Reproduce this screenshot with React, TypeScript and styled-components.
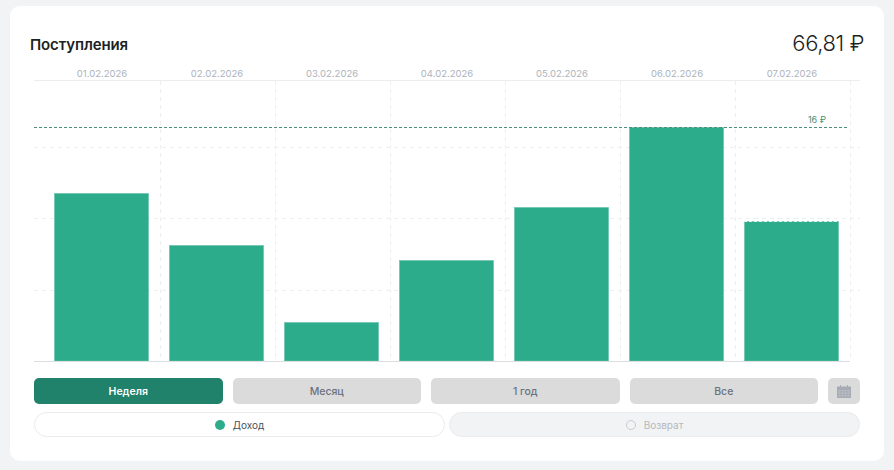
import React from "react";
import styled, { createGlobalStyle } from "styled-components";

const Global = createGlobalStyle`
  html, body { margin: 0; padding: 0; background: #f2f3f5; }
  body { font-family: Inter, "Noto Sans", sans-serif; }
`;

const Page = styled.div`
  width: 894px;
  height: 470px;
  box-sizing: border-box;
  padding: 6px 10px 9px;
  overflow: hidden;
`;

const Card = styled.section`
  height: 455px;
  box-sizing: border-box;
  background: #fff;
  border-radius: 10px;
  padding: 24px 20px 24px 20px;
  display: flex;
  flex-direction: column;
`;

const Header = styled.header`
  display: flex;
  justify-content: space-between;
  align-items: center;
  height: 28px;
`;

const Title = styled.h2`
  margin: 0;
  font-size: 15px;
  line-height: 28px;
  font-weight: 600;
  color: #1c1f24;
  letter-spacing: -0.12px;
  position: relative;
  top: 1px;
`;

const Amount = styled.div`
  font-size: 22px;
  line-height: 28px;
  font-weight: 300;
  color: #1c1f24;
  letter-spacing: -0.4px;
  position: relative;
  top: -1px;
`;

const Chart = styled.svg`
  display: block;
  margin: 5px 0 0 4px;
  width: 826px;
  height: 299px;
  flex: none;
`;

const DateText = styled.text`
  font-family: Inter, sans-serif;
  font-size: 9.5px;
  fill: #adb2bc;
  text-anchor: middle;
`;

const LimitText = styled.text`
  font-family: Inter, sans-serif;
  font-size: 9px;
  fill: #4f8a74;
  text-anchor: end;
`;

const Periods = styled.div`
  display: flex;
  gap: 10px;
  margin: 16px 4px 0 4px;
  height: 26px;
`;

const PeriodButton = styled.button<{ $active?: boolean }>`
  flex: 1 1 0;
  min-width: 0;
  padding: 0;
  border: none;
  border-radius: 5px;
  background: ${(p) => (p.$active ? "#21826b" : "#dbdbdb")};
  color: ${(p) => (p.$active ? "#ffffff" : "#6b7280")};
  font-family: Inter, sans-serif;
  font-size: 10.5px;
  font-weight: ${(p) => (p.$active ? 600 : 500)};
`;

const CalendarButton = styled.button`
  flex: none;
  width: 32px;
  padding: 0;
  border: none;
  border-radius: 5px;
  background: #dbdbdb;
  display: flex;
  align-items: center;
  justify-content: center;
`;

const Filters = styled.div`
  display: flex;
  gap: 4px;
  margin: 8px 4px 0 4px;
  height: 25px;
`;

const Pill = styled.div<{ $off?: boolean }>`
  flex: 1 1 0;
  box-sizing: border-box;
  border: 1px solid #e9ebee;
  border-radius: 13px;
  background: ${(p) => (p.$off ? "#f2f3f5" : "#fff")};
  color: ${(p) => (p.$off ? "#b5b8bd" : "#4a4f5a")};
  font-size: 10px;
  display: flex;
  align-items: center;
  justify-content: center;
  gap: 8px;
`;

const Dot = styled.span<{ $off?: boolean }>`
  width: 10px;
  height: 10px;
  box-sizing: border-box;
  border-radius: 50%;
  background: ${(p) => (p.$off ? "transparent" : "#2dac8c")};
  border: ${(p) => (p.$off ? "1px solid #c9cbce" : "none")};
`;

const dates = ["01.02.2026", "02.02.2026", "03.02.2026", "04.02.2026", "05.02.2026", "06.02.2026", "07.02.2026"];
const tops = [193, 245, 322, 260, 207, 127, 221];
const Y0 = 63; // page y of svg top
const X0 = 34;
const gridX = [160.5, 275.5, 390.5, 505.5, 620.5, 735.5, 850.5];
const gridY = [147.5, 218.5, 290.5];

const Calendar = () => (
  <svg width="14" height="14" viewBox="0 0 14 14" fill="none">
    <path d="M0 2.5h3V1h1v1.5h6V1h1v1.5h3V14H0z" fill="#a7abb3" />
    <g fill="#bcc0c6">
      {[1.5, 4.5, 7.5, 10.5].map((x) =>
        [6, 8.5, 11].map((y) => <rect key={`${x}-${y}`} x={x} y={y} width="2" height="1.5" />)
      )}
    </g>
  </svg>
);

export default function App() {
  return (
    <Page>
      <Global />
      <Card>
        <Header>
          <Title>Поступления</Title>
          <Amount>66,81 ₽</Amount>
        </Header>
        <Chart viewBox={`${X0} ${Y0} 826 299`}>
          {dates.map((d, i) => (
            <DateText key={d} x={102 + i * 115} y={77}>{d}</DateText>
          ))}
          <line x1={34} x2={860} y1={80.5} y2={80.5} stroke="#ebedef" />
          {gridX.map((x) => (
            <line key={x} x1={x} x2={x} y1={81} y2={361} stroke="#eceef0" strokeDasharray="4 4" />
          ))}
          {gridY.map((y) => (
            <line key={y} x1={34} x2={860} y1={y} y2={y} stroke="#eceef0" strokeDasharray="4 4" />
          ))}
          {tops.map((t, i) => (
            <rect key={i} x={54.5 + i * 115} y={t + 0.5} width={94} height={361 - t - 0.5} fill="#2dac8c" stroke="#64c2aa" strokeWidth={0.6} />
          ))}
          <line x1={34} x2={848} y1={127.5} y2={127.5} stroke="#4b8f7c" strokeDasharray="3 2" />
          <line x1={744} x2={839} y1={221.5} y2={221.5} stroke="#e6f5f0" strokeDasharray="3 2" />
          <line x1={34} x2={850} y1={361.5} y2={361.5} stroke="#dcdee0" />
          <LimitText x={826} y={123}>16 ₽</LimitText>
        </Chart>
        <Periods>
          <PeriodButton $active>Неделя</PeriodButton>
          <PeriodButton>Месяц</PeriodButton>
          <PeriodButton>1 год</PeriodButton>
          <PeriodButton>Все</PeriodButton>
          <CalendarButton aria-label="Календарь"><Calendar /></CalendarButton>
        </Periods>
        <Filters>
          <Pill><Dot />Доход</Pill>
          <Pill $off><Dot $off />Возврат</Pill>
        </Filters>
      </Card>
    </Page>
  );
}
